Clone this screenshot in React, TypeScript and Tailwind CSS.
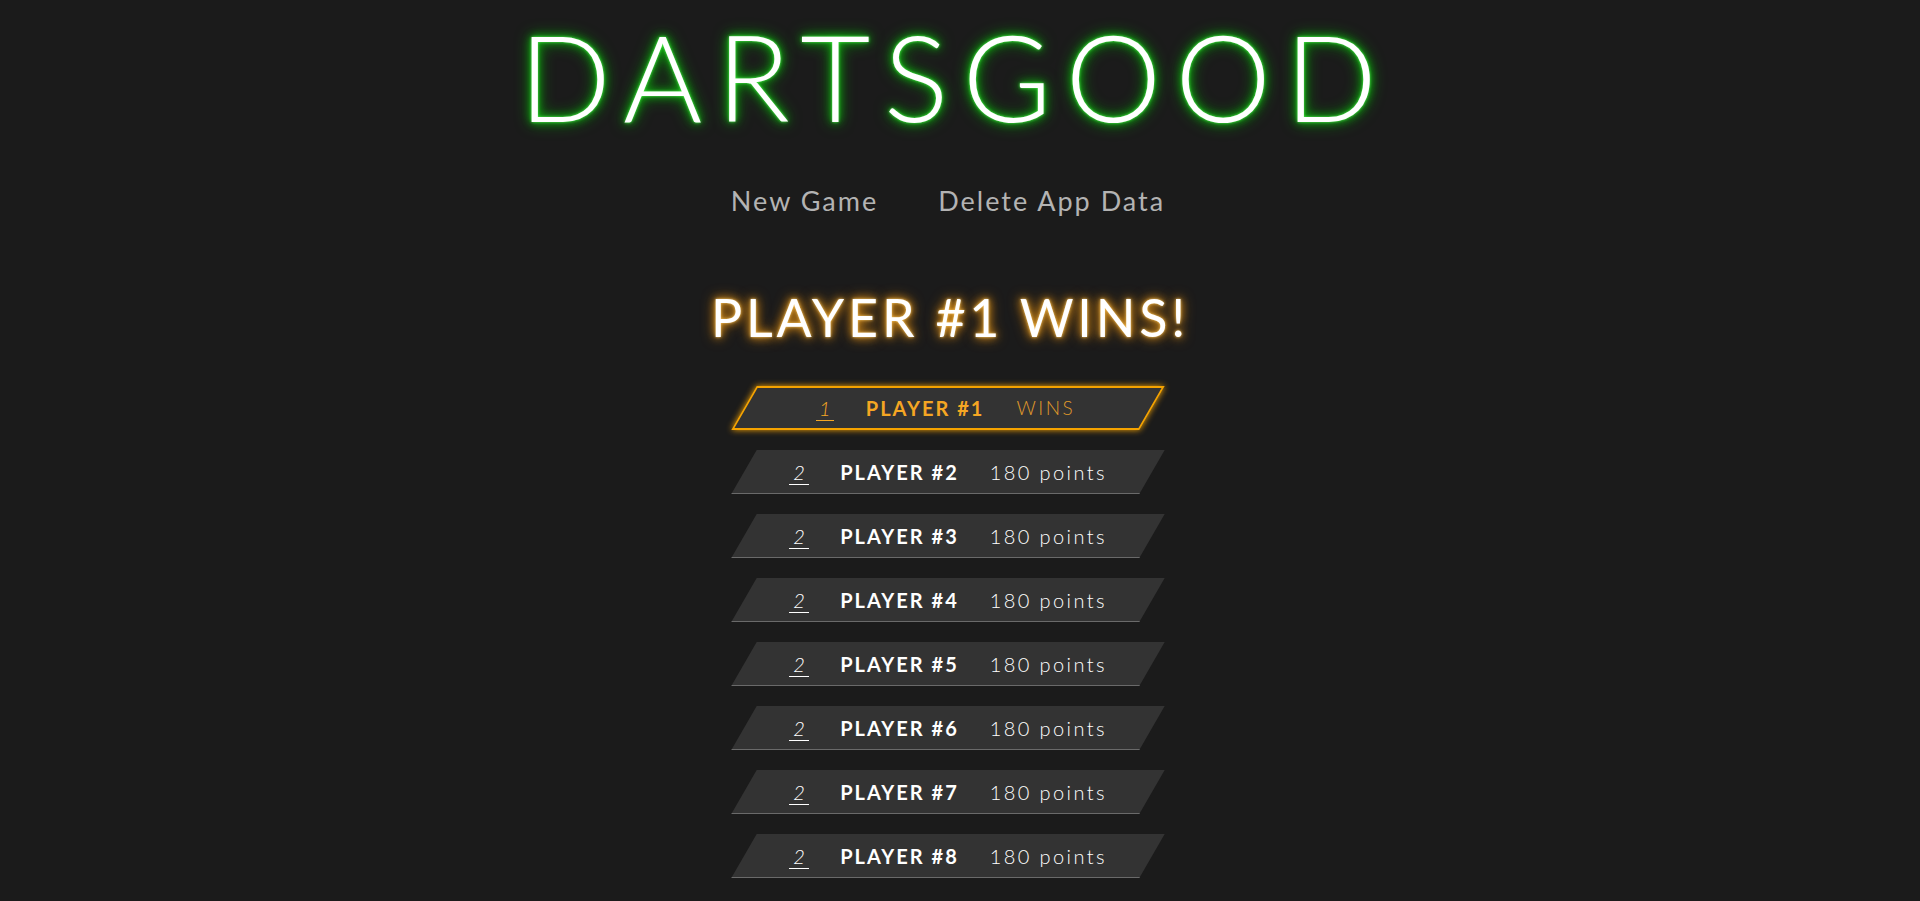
import React from "react";

const players = [2, 3, 4, 5, 6, 7, 8];

export default function App() {
  return (
    <div className="min-h-screen bg-[#1b1b1b] flex flex-col items-center pr-[24px] font-['Lato',sans-serif]">
      <h1 className="mt-[15px] text-[121px] leading-none font-light tracking-[14px] mr-[-14px] text-white [text-shadow:0_0_3px_#5f5,0_0_8px_#1c1,0_0_16px_#0a0]">
        DARTSGOOD
      </h1>
      <nav className="mt-[51px] flex gap-[60px] text-[27px] leading-none tracking-[2px] text-[#b3b3b3]">
        <span>New Game</span>
        <span>Delete App Data</span>
      </nav>
      <h2 className="mt-[77px] text-[52px] leading-none tracking-[3.8px] mr-[-4px] text-white font-normal [text-shadow:0_0_3px_#fc6,0_0_8px_#f0a020,0_0_14px_#c07000]">
        PLAYER #1 WINS!
      </h2>
      <div className="mt-[43px] flex flex-col gap-[20px]">
        <div className="relative w-[408px] h-[44px] flex items-center justify-center">
          <div className="absolute inset-0 -skew-x-[30deg] bg-[#333333] border-2 border-[#f5a300] shadow-[0_0_6px_#f5a300]" />
          <div className="relative flex items-center pr-[5px] text-[#f5a623]">
            <span className="w-[18px] text-center border-b border-[#f5a623] text-[20px] font-light italic leading-[24px]">1</span>
            <span className="ml-[32px] text-[20px] font-bold tracking-[2px]">PLAYER #1</span>
            <span className="ml-[32px] text-[19px] font-light tracking-[2.5px] text-[#e09a2a]">WINS</span>
          </div>
        </div>
        {players.map((p) => (
          <div key={p} className="relative w-[408px] h-[44px] flex items-center justify-center">
            <div className="absolute inset-0 -skew-x-[30deg] bg-[#333333] border-b border-[#6a6a6a]" />
            <div className="relative flex items-center text-white">
              <span className="w-[20px] text-center border-b border-white text-[20px] font-light italic leading-[24px]">2</span>
              <span className="ml-[31px] text-[20px] font-bold tracking-[2px]">PLAYER #{p}</span>
              <span className="ml-[31px] text-[20px] font-light tracking-[2.4px] text-white">180 points</span>
            </div>
          </div>
        ))}
      </div>
    </div>
  );
}
